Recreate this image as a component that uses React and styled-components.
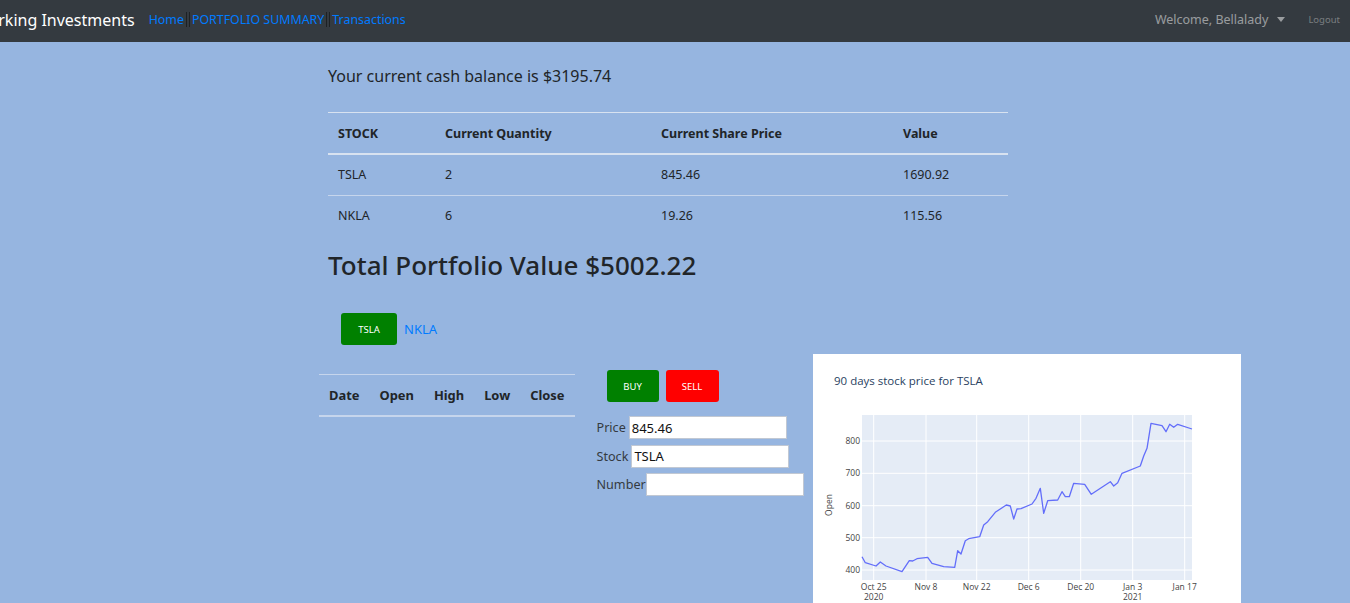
import styled, { createGlobalStyle } from "styled-components";

const GlobalStyle = createGlobalStyle`
  body {
    margin: 0;
    background-color: #96b5e0;
    font-family: "Noto Sans", "Open Sans", sans-serif;
    color: #212529;
    overflow: hidden;
  }
`;

const Navbar = styled.nav`
  height: 42px;
  box-sizing: border-box;
  padding-bottom: 3px;
  background-color: #343a40;
  display: flex;
  align-items: center;
  padding-right: 10px;
  overflow: hidden;
`;

const Brand = styled.span`
  margin-left: -26px;
  margin-right: 14px;
  font-size: 16px;
  color: #fff;
  white-space: nowrap;
`;

const NavLinks = styled.div`
  display: flex;
  align-items: center;
`;

const NavLink = styled.a`
  color: #007bff;
  font-size: 12.4px;
  text-decoration: none;
  white-space: nowrap;
`;

const Divider = styled.span`
  display: inline-block;
  width: 2px;
  height: 15px;
  margin: 0 2px;
  border-left: 1px solid #1d2124;
  border-right: 1px solid #1d2124;
`;

const NavRight = styled.div`
  margin-left: auto;
  display: flex;
  align-items: center;
`;

const Welcome = styled.span`
  color: rgba(255, 255, 255, 0.5);
  font-size: 12.5px;
  display: flex;
  align-items: center;

  &::after {
    content: "";
    margin-left: 9px;
    border-top: 5px solid rgba(255, 255, 255, 0.5);
    border-left: 4.5px solid transparent;
    border-right: 4.5px solid transparent;
  }
`;

const Logout = styled.span`
  margin-left: 23px;
  color: rgba(255, 255, 255, 0.35);
  font-size: 9.5px;
`;

const Main = styled.main`
  padding-left: 319px;
`;

const Summary = styled.section`
  width: 680px;
  margin-left: 9px;
  padding-top: 22px;
`;

const Cash = styled.h5`
  margin: 0 0 24px;
  font-size: 16px;
  font-weight: 400;
  line-height: 24px;
`;

const Table = styled.table`
  width: 100%;
  border-collapse: collapse;
  table-layout: fixed;
  font-size: 12.5px;
  line-height: 16px;

  th {
    text-align: left;
    font-weight: 700;
    padding: 13px 10px 11px;
    border-top: 1px solid #d8e2f0;
    border-bottom: 2px solid #d8e2f0;
  }

  td {
    padding: 12px 10px;
    border-top: 1px solid #c6d5ec;
  }

  tbody tr:first-child td {
    border-top: none;
  }
`;

const Total = styled.h2`
  margin: 12px 0 0;
  font-size: 26px;
  font-weight: 500;
  line-height: 34px;
`;

const Tabs = styled.div`
  display: flex;
  align-items: center;
  gap: 7px;
  margin: 31px 0 0 13px;
`;

const Button = styled.button`
  border: none;
  border-radius: 3px;
  color: #fff;
  font-family: inherit;
  font-size: 9.5px;
  background-color: ${(p) => (p.$red ? "#ff0000" : "#008000")};
  width: ${(p) => p.$w}px;
  height: 32px;
  padding: 0;
`;

const StockLink = styled.a`
  color: #007bff;
  font-size: 13px;
  text-decoration: none;
`;

const Lower = styled.div`
  display: flex;
  align-items: flex-start;
  margin-top: 9px;
`;

const History = styled.table`
  margin-top: 20px;
  border-collapse: collapse;
  font-size: 12.9px;
  line-height: 18px;

  th {
    text-align: left;
    font-weight: 700;
    padding: 11px 10px;
    border-top: 1px solid #c6d5ec;
    border-bottom: 2px solid #c6d5ec;
  }
`;

const Trade = styled.div`
  margin-left: 22px;
  padding-top: 16px;
`;

const TradeButtons = styled.div`
  display: flex;
  gap: 7px;
  margin-left: 10px;
  margin-bottom: 14px;
`;

const Field = styled.label`
  display: flex;
  align-items: center;
  height: 23px;
  margin-bottom: 5.5px;
  font-size: 12.6px;
  color: #343a40;
`;

const Input = styled.input`
  width: 158px;
  height: 23px;
  box-sizing: border-box;
  margin-left: ${(p) => p.$gap ?? 3}px;
  border: 1px solid #c1c8d3;
  padding: 1px 2px;
  font-family: inherit;
  font-size: 13px;
  color: #111;
  background: #fff;
  outline: none;
`;

const ChartCard = styled.div`
  margin-left: 9px;
  width: 428px;
  height: 450px;
  background: #fff;
  flex-shrink: 0;
`;

const pts = [
  [150, 620], [160, 638], [192, 648], [205, 636], [222, 648], [270, 665], [292, 632],
  [302, 633], [315, 626], [347, 622], [360, 640], [395, 650], [428, 652], [437, 602],
  [447, 612], [460, 572], [470, 566], [503, 560], [515, 525], [527, 515], [550, 487],
  [583, 465], [595, 468], [605, 507], [615, 477], [627, 476], [660, 462], [672, 445],
  [685, 415], [695, 490], [707, 452], [737, 450], [750, 425], [760, 440], [772, 440],
  [785, 400], [818, 403], [838, 433], [895, 395], [905, 408], [917, 398], [930, 370],
  [985, 348], [995, 318], [1005, 295], [1017, 220], [1050, 227], [1062, 245],
  [1073, 223], [1085, 232], [1097, 223], [1140, 237],
];

const xTicks = [
  { x: 60.7, label: "Oct 25", sub: "2020" },
  { x: 113, label: "Nov 8" },
  { x: 163.7, label: "Nov 22" },
  { x: 215.7, label: "Dec 6" },
  { x: 267.7, label: "Dec 20" },
  { x: 319.7, label: "Jan 3", sub: "2021" },
  { x: 371.7, label: "Jan 17" },
];

const yTicks = [
  { y: 87, label: "800" },
  { y: 119.3, label: "700" },
  { y: 151.7, label: "600" },
  { y: 183.7, label: "500" },
  { y: 216, label: "400" },
];

const PriceChart = () => {
  const line = pts.map(([x, y]) => `${(x / 3 - 1).toFixed(1)},${(y / 3 - 4).toFixed(1)}`).join(" ");
  return (
    <svg width="428" height="450" fontFamily='"Open Sans", sans-serif'>
      <text x="21" y="31" fontSize="11.5" fill="#2a3f5f">90 days stock price for TSLA</text>
      <rect x="49" y="61" width="330" height="165" fill="#e5ecf6" />
      {xTicks.map((t) => (
        <line key={t.label} x1={t.x} x2={t.x} y1="61" y2="226" stroke="#fff" strokeWidth="1" />
      ))}
      {yTicks.map((t) => (
        <line key={t.label} x1="49" x2="379" y1={t.y} y2={t.y} stroke="#fff" strokeWidth="1" />
      ))}
      <polyline points={line} fill="none" stroke="#636efa" strokeWidth="1.3" strokeLinejoin="round" />
      {yTicks.map((t) => (
        <text key={t.label} x="47" y={t.y + 3} fontSize="8.5" fill="#444" textAnchor="end">{t.label}</text>
      ))}
      {xTicks.map((t) => (
        <g key={t.label}>
          <text x={t.x} y="236" fontSize="8.5" fill="#444" textAnchor="middle">{t.label}</text>
          {t.sub && <text x={t.x} y="246" fontSize="8.5" fill="#444" textAnchor="middle">{t.sub}</text>}
        </g>
      ))}
      <text x="19" y="151" fontSize="8.5" fill="#444" textAnchor="middle" transform="rotate(-90 19 151)">Open</text>
    </svg>
  );
};

const holdings = [
  { stock: "TSLA", qty: 2, price: "845.46", value: "1690.92" },
  { stock: "NKLA", qty: 6, price: "19.26", value: "115.56" },
];

export default function App() {
  return (
    <>
      <GlobalStyle />
      <Navbar>
        <Brand>Working Investments</Brand>
        <NavLinks>
          <NavLink href="#">Home</NavLink>
          <Divider />
          <NavLink href="#">PORTFOLIO SUMMARY</NavLink>
          <Divider />
          <NavLink href="#">Transactions</NavLink>
        </NavLinks>
        <NavRight>
          <Welcome>Welcome, Bellalady</Welcome>
          <Logout>Logout</Logout>
        </NavRight>
      </Navbar>
      <Main>
        <Summary>
          <Cash>Your current cash balance is $3195.74</Cash>
          <Table>
            <colgroup>
              <col style={{ width: 107 }} />
              <col style={{ width: 216 }} />
              <col style={{ width: 242 }} />
              <col />
            </colgroup>
            <thead>
              <tr>
                <th>STOCK</th>
                <th>Current Quantity</th>
                <th>Current Share Price</th>
                <th>Value</th>
              </tr>
            </thead>
            <tbody>
              {holdings.map((h) => (
                <tr key={h.stock}>
                  <td>{h.stock}</td>
                  <td>{h.qty}</td>
                  <td>{h.price}</td>
                  <td>{h.value}</td>
                </tr>
              ))}
            </tbody>
          </Table>
          <Total>Total Portfolio Value $5002.22</Total>
          <Tabs>
            <Button $w={56}>TSLA</Button>
            <StockLink href="#">NKLA</StockLink>
          </Tabs>
        </Summary>
        <Lower>
          <History>
            <thead>
              <tr>
                <th>Date</th>
                <th>Open</th>
                <th>High</th>
                <th>Low</th>
                <th>Close</th>
              </tr>
            </thead>
          </History>
          <Trade>
            <TradeButtons>
              <Button $w={52}>BUY</Button>
              <Button $w={53} $red>SELL</Button>
            </TradeButtons>
            <Field>Price<Input defaultValue="845.46" /></Field>
            <Field>Stock<Input defaultValue="TSLA" /></Field>
            <Field>Number<Input $gap={0} defaultValue="" /></Field>
          </Trade>
          <ChartCard>
            <PriceChart />
          </ChartCard>
        </Lower>
      </Main>
    </>
  );
}
